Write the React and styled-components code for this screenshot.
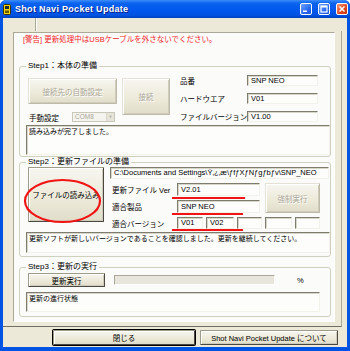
import React from "react";
import styled, { createGlobalStyle } from "styled-components";

const Global = createGlobalStyle`
  html, body { margin: 0; padding: 0; background: #fff; }
  body {
    font-family: "Liberation Sans", "Noto Sans CJK JP", sans-serif;
    font-size: 7.5px;
    color: #000;
  }
  * { box-sizing: border-box; }
`;

const Window = styled.div`
  width: 350px;
  height: 351px;
  display: flex;
  flex-direction: column;
  background: #0054e3;
  border-radius: 6px 6px 0 0;
  overflow: hidden;
`;

const TitleBar = styled.div`
  height: 18px;
  flex: none;
  display: flex;
  align-items: center;
  gap: 4px;
  padding: 0 2px 0 3px;
  background: linear-gradient(#3c8dfb 0%, #0b63ee 18%, #0058ee 55%, #0053e0 85%, #0040c0 100%);
  color: #fff;
  font-weight: bold;
  font-size: 9px;
  text-shadow: 1px 1px #0a1f86;
`;

const Title = styled.span`
  flex: 1;
  letter-spacing: 0.3px;
`;

const Ctrl = styled.div`
  width: 12px;
  height: 12px;
  border: 1px solid #fff;
  border-radius: 2px;
  background: ${(p) =>
    p.$close
      ? "linear-gradient(135deg, #f09a78, #e0461e 60%, #c8350e)"
      : "linear-gradient(135deg, #6fa3ff, #2a6cf2 60%, #1551d8)"};
  display: flex;
  align-items: center;
  justify-content: center;
  margin-left: ${(p) => (p.$first ? "0" : "2px")};
`;

const Body = styled.div`
  flex: 1;
  margin: 0 3px 4px 3px;
  background: #ece9d8;
  display: flex;
  flex-direction: column;
`;

const Strip = styled.div`
  height: 13px;
  flex: none;
  display: flex;
`;

const StripCell = styled.div`
  width: 33px;
  border-right: 1px solid #aca899;
  box-shadow: 1px 0 0 #fff;
`;

const Frame = styled.div`
  height: 296px;
  flex: none;
  display: flex;
  padding: 1px 6px 4px 10px;
  width: 339px;
  border-right: 1px solid #aca899;
  border-bottom: 1px solid #716f64;
`;

const Panel = styled.div`
  width: 322px;
  height: 290px;
  background: #fbfbf9;
  border: 1px solid;
  border-color: #aca899 #fff #fff #aca899;
  padding: 0 3px 0 5px;
  display: flex;
  flex-direction: column;
  text-align: left;
`;

const Warning = styled.div`
  margin-top: 2px;
  height: 10px;
  line-height: 10px;
  padding-left: 4px;
  color: #f0232b;
`;

const Group = styled.fieldset`
  margin: ${(p) => p.$top || 0}px 0 0 0;
  width: 312px;
  padding: ${(p) => p.$pad || "0 0 1px 6px"};
  border: 1px solid #d0d0bf;
  border-radius: 3px;
  min-width: 0;
`;

const Legend = styled.legend`
  padding: 0 2px;
  margin-left: 0;
  height: 10px;
  line-height: 10px;
  font-size: 8px;
`;

const StepOneTop = styled.div`
  height: 48px;
  display: flex;
`;

const StepOneLeft = styled.div`
  flex: none;
  width: 152px;
  padding: 3px 0 0 2px;
  display: grid;
  grid-template-columns: 89px 48px;
  grid-template-rows: 26px 10px;
  column-gap: 5px;
  row-gap: 8px;
`;

const Button = styled.button`
  font: inherit;
  margin: 0;
  padding: 0;
  width: ${(p) => p.$w}px;
  height: ${(p) => p.$h}px;
  margin-left: ${(p) => p.$ml || 0}px;
  align-self: start;
  background: linear-gradient(#f7f6f0, #ece9d8 60%, #e0ddcb);
  color: ${(p) => (p.disabled ? "#aca899" : "#000")};
  text-shadow: ${(p) => (p.disabled ? "1px 1px 0 #fff" : "none")};
  border: 1px solid;
  border-color: ${(p) =>
    p.disabled ? "#e4e2d6 #bdbaa8 #bdbaa8 #e4e2d6" : "#9e9b8a #4a4840 #4a4840 #9e9b8a"};
  box-shadow: ${(p) =>
    p.$default
      ? "0 0 0 1px #000, inset 1px 1px 0 #fff"
      : "inset 1px 1px 0 #fff, inset -1px -1px 0 #cfccbb"};
  border-radius: 1px;
  grid-column: ${(p) => p.$col || "auto"};
  grid-row: ${(p) => p.$row || "auto"};
`;

const ManualRow = styled.div`
  grid-column: 1;
  grid-row: 2;
  display: flex;
  align-items: center;
  height: 10px;
`;

const ManualLabel = styled.span`
  width: 44px;
  padding-left: 1px;
`;

const Combo = styled.div`
  width: 43px;
  height: 10px;
  display: flex;
  border: 1px solid #c9c7ba;
  background: #f4f3ee;
  color: #aca899;
  font-size: 6.5px;
  line-height: 8px;
`;

const ComboText = styled.span`
  flex: 1;
  padding-left: 2px;
`;

const ComboArrow = styled.span`
  width: 8px;
  background: #e6e4d8;
  border-left: 1px solid #d8d6c8;
  display: flex;
  align-items: center;
  justify-content: center;
  font-size: 4px;
`;

const InfoGrid = styled.div`
  flex: none;
  width: 140px;
  display: grid;
  grid-template-columns: 69px 71px;
  grid-template-rows: repeat(3, 11px);
  row-gap: 7px;
  align-items: center;
  justify-items: start;
`;

const Field = styled.div`
  width: ${(p) => (p.$w ? `${p.$w}px` : "100%")};
  height: ${(p) => p.$h || 11}px;
  margin-left: ${(p) => p.$ml || 0}px;
  background: #fdfdfb;
  border: 1px solid;
  border-color: #7e7c6e #f2f1ea #f2f1ea #7e7c6e;
  box-shadow: inset 1px 1px 0 #d8d6ca;
  padding: 0 3px;
  line-height: ${(p) => (p.$h || 11) - 2}px;
  white-space: nowrap;
  overflow: hidden;
  grid-column: ${(p) => p.$col || "auto"};
`;

const Memo = styled(Field)`
  line-height: 10px;
  padding: 1px 2px;
  white-space: normal;
  font-size: 7px;
`;

const StepTwoBody = styled.div`
  position: relative;
  display: grid;
  grid-template-columns: 76px 219px;
  column-gap: 6px;
  margin-left: 2px;
  height: 62px;
`;

const FileFields = styled.div`
  display: grid;
  grid-template-columns: 65px 88px 66px;
  grid-template-rows: 12px 13px 13px 12px;
  row-gap: 4px;
  align-items: center;
  justify-items: start;
`;

const Label = styled.span`
  padding-left: 2px;
  white-space: nowrap;
  grid-column: 1;
`;

const VersionRow = styled.div`
  grid-column: 2 / span 2;
  display: flex;
  height: 12px;
  padding-left: 2px;
  gap: 3px;
`;

const Marks = styled.svg`
  position: absolute;
  left: 0;
  top: 0;
  width: 100%;
  height: 100%;
  overflow: visible;
  pointer-events: none;
`;

const ExecRow = styled.div`
  display: flex;
  align-items: center;
  height: 14px;
  margin-top: 1px;
`;

const Progress = styled.div`
  width: 161px;
  height: 10px;
  margin-left: 9px;
  background: #e8e6dc;
  border: 1px solid;
  border-color: #aca899 #fff #fff #aca899;
`;

const Percent = styled.span`
  margin-left: 22px;
`;

const Footer = styled.div`
  height: 20px;
  flex: none;
  display: flex;
  gap: 5px;
  padding: 3px 0 0 50px;
`;

const fileVersions = ["V01", "V02", "", "", ""];
const versionWidths = [26, 28, 25, 27, 25];

export default function App() {
  return (
    <>
      <Global />
      <Window>
        <TitleBar>
          <svg width="8" height="11" viewBox="0 0 8 11">
            <rect x="0.5" y="0.5" width="7" height="10" rx="1" fill="#f5d400" stroke="#3a3000" />
            <rect x="2" y="2" width="4" height="3" fill="#1c2a3a" />
            <rect x="2" y="6.5" width="4" height="2.5" fill="#6b5a00" />
          </svg>
          <Title>Shot Navi Pocket Update</Title>
          <Ctrl $first>
            <svg width="8" height="8" viewBox="0 0 8 8">
              <rect x="1" y="5.5" width="4" height="1.5" fill="#fff" />
            </svg>
          </Ctrl>
          <Ctrl>
            <svg width="8" height="8" viewBox="0 0 8 8">
              <rect x="1" y="1" width="6" height="6" fill="none" stroke="#fff" strokeWidth="1.2" />
              <rect x="1" y="1" width="6" height="1.5" fill="#fff" />
            </svg>
          </Ctrl>
          <Ctrl $close>
            <svg width="8" height="8" viewBox="0 0 8 8">
              <path d="M1.5 1.5 L6.5 6.5 M6.5 1.5 L1.5 6.5" stroke="#fff" strokeWidth="1.5" />
            </svg>
          </Ctrl>
        </TitleBar>
        <Body>
          <Strip>
            <StripCell />
          </Strip>
          <Frame>
            <Panel>
              <Warning>[警告] 更新処理中はUSBケーブルを外さないでください。</Warning>

              <Group $top={16} $pad="4px 0 1px 6px">
                <Legend>Step1：本体の準備</Legend>
                <StepOneTop>
                  <StepOneLeft>
                    <Button disabled $w={89} $h={26} $col="1" $row="1">
                      接続先の自動設定
                    </Button>
                    <Button disabled $w={48} $h={37} $col="2" $row="1 / span 2">
                      接続
                    </Button>
                    <ManualRow>
                      <ManualLabel>手動設定</ManualLabel>
                      <Combo>
                        <ComboText>COM8</ComboText>
                        <ComboArrow>▼</ComboArrow>
                      </Combo>
                    </ManualRow>
                  </StepOneLeft>
                  <InfoGrid>
                    <Label>品番</Label>
                    <Field $w={71}>SNP NEO</Field>
                    <Label>ハードウエア</Label>
                    <Field $w={71}>V01</Field>
                    <Label>ファイルバージョン</Label>
                    <Field $w={71}>V1.00</Field>
                  </InfoGrid>
                </StepOneTop>
                <Memo $w={304} $h={30} style={{ marginTop: 2 }}>
                  読み込みが完了しました。
                </Memo>
              </Group>

              <Group $pad="0 0 3px 6px">
                <Legend>Step2：更新ファイルの準備</Legend>
                <StepTwoBody>
                  <Button $w={76} $h={55}>
                    ファイルの読み込み
                  </Button>
                  <FileFields>
                    <Field $h={12} $w={219} $col="1 / span 3">
                      C:\Documents and Settings\Ÿ‚¿‚æ\ƒfƒXƒNƒgƒbƒv\SNP_NEO
                    </Field>
                    <Label>更新ファイル Ver</Label>
                    <Field $h={13} $w={83} $ml={2} $col="2">
                      V2.01
                    </Field>
                    <Button disabled $w={55} $h={30} $ml={2} $col="3" $row="2 / span 2">
                      強制実行
                    </Button>
                    <Label>適合製品</Label>
                    <Field $h={13} $w={83} $ml={2} $col="2">
                      SNP NEO
                    </Field>
                    <Label>適合バージョン</Label>
                    <VersionRow>
                      {fileVersions.map((v, i) => (
                        <Field key={i} $h={12} $w={versionWidths[i]}>
                          {v}
                        </Field>
                      ))}
                    </VersionRow>
                  </FileFields>
                  <Marks>
                    <ellipse cx="34.5" cy="34" rx="37.5" ry="21" fill="none" stroke="#f01414" strokeWidth="2.2" />
                    <line x1="144" y1="31" x2="217" y2="31" stroke="#f01414" strokeWidth="2" />
                    <line x1="144" y1="47" x2="215" y2="47" stroke="#f01414" strokeWidth="2" />
                    <line x1="144" y1="63" x2="215" y2="63" stroke="#f01414" strokeWidth="2" />
                  </Marks>
                </StepTwoBody>
                <Memo $w={304} $h={21} style={{ marginTop: 3 }}>
                  更新ソフトが新しいバージョンであることを確認しました。更新を継続してください。
                </Memo>
              </Group>

              <Group $top={5} $pad="0 0 4px 6px">
                <Legend>Step3：更新の実行</Legend>
                <ExecRow>
                  <Button $w={77} $h={14} $ml={2}>
                    更新実行
                  </Button>
                  <Progress />
                  <Percent>%</Percent>
                </ExecRow>
                <Memo $w={294} $h={20} style={{ marginTop: 5 }}>
                  更新の進行状態
                </Memo>
              </Group>
            </Panel>
          </Frame>
          <Footer>
            <Button $w={142} $h={15} $default>
              閉じる
            </Button>
            <Button $w={138} $h={15}>
              Shot Navi Pocket Update について
            </Button>
          </Footer>
        </Body>
      </Window>
    </>
  );
}
